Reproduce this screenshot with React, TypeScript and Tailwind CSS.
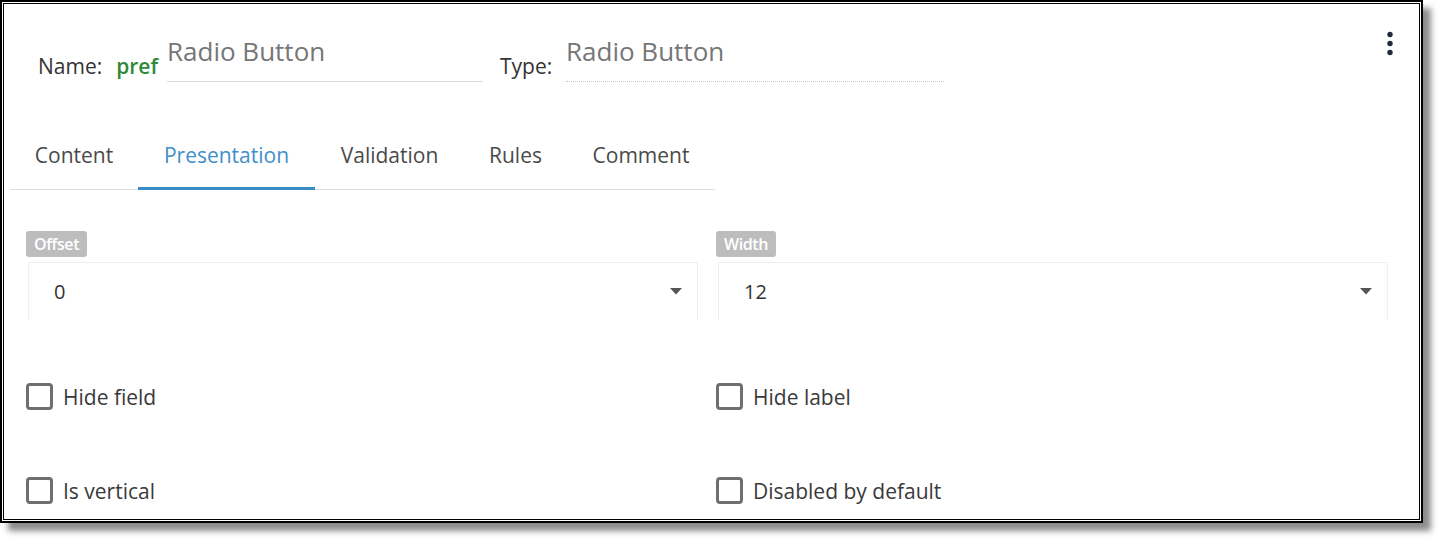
import { useState } from 'react';

const tabs = [
  { label: 'Content', width: 'w-[128px]' },
  { label: 'Presentation', width: 'w-[177px]' },
  { label: 'Validation', width: 'w-[149px]' },
  { label: 'Rules', width: 'w-[103px]' },
  { label: 'Comment', width: 'w-[148px]' },
];

function Kebab() {
  return (
    <svg width="8" height="26" viewBox="0 0 8 26">
      <circle cx="4" cy="3.5" r="2.7" fill="#1f2b3a" />
      <circle cx="4" cy="12.5" r="2.7" fill="#1f2b3a" />
      <circle cx="4" cy="21.5" r="2.7" fill="#1f2b3a" />
    </svg>
  );
}

function Caret() {
  return (
    <svg width="12" height="7" viewBox="0 0 12 7">
      <path d="M0 0 L12 0 L6 6.5 Z" fill="#555555" />
    </svg>
  );
}

function SelectField({ label, value }: { label: string; value: string }) {
  return (
    <div className="flex flex-col items-start">
      <span className="h-[26px] px-[8px] rounded-[3px] bg-[#bdbdbd] text-white text-[16px] font-semibold leading-[26px] tracking-[-0.4px]">
        {label}
      </span>
      <div className="mt-[5px] ml-[2px] self-stretch h-[58px] flex items-center justify-between pl-[25px] pr-[15px] border-t border-x border-[#efefef] text-[20px] text-[#333]">
        <span>{value}</span>
        <Caret />
      </div>
    </div>
  );
}

function Checkbox({ label }: { label: string }) {
  const [checked, setChecked] = useState(false);
  return (
    <label className="flex items-center gap-[10px] h-[27px] cursor-pointer" onClick={() => setChecked(!checked)}>
      <span className="w-[27px] h-[27px] border-[3px] border-[#6f6f6f] rounded-[4px] bg-white" />
      <span className="text-[21px] leading-[28px] text-[#3a3a3a]">{label}</span>
    </label>
  );
}

export default function App() {
  const [active, setActive] = useState('Presentation');

  return (
    <div className="w-[1439px] h-[537px] bg-white font-['Open_Sans',sans-serif]">
      <div className="w-[1423px] h-[523px] border-2 border-black p-px bg-white shadow-[8px_8px_6px_rgba(0,0,0,0.45)]">
        <div className="h-full border border-black bg-white overflow-hidden">
          {/* Header */}
          <div className="flex items-start pl-[34px] pr-[25px] pt-[27px]">
            <div className="w-[129px] flex items-baseline mt-[21px] text-[21px] leading-[28px]">
              <span className="text-[#333]">Name:</span>
              <span className="ml-[14px] font-semibold text-[#2f8a34]">pref</span>
            </div>
            <div className="mt-[4px] w-[316px] h-[47px] border-b border-[#dcdcdc] text-[26px] leading-[32px] text-[#767676]">
              Radio Button
            </div>
            <div className="ml-[17px] w-[66px] mt-[21px] text-[21px] leading-[28px] text-[#333]">Type:</div>
            <div className="mt-[4px] w-[378px] h-[47px] border-b border-dotted border-[#c8c8c8] text-[26px] leading-[32px] text-[#767676]">
              Radio Button
            </div>
            <div className="ml-auto">
              <Kebab />
            </div>
          </div>

          {/* Tabs */}
          <div className="ml-[6px] w-[705px] mt-[43px] flex border-b border-[#dedede]">
            {tabs.map(tab => (
              <button
                key={tab.label}
                onClick={() => setActive(tab.label)}
                className={
                  tab.width +
                  ' -mb-px pt-4 pb-[18px] border-b-[3px] text-center text-[21px] leading-[28px] ' +
                  (active === tab.label ? 'border-[#3a8cc4] text-[#3f8fc8]' : 'border-transparent text-[#4a4a4a]')
                }
              >
                {tab.label}
              </button>
            ))}
          </div>

          {/* Selects */}
          <div className="ml-[22px] w-[1362px] mt-[41px] grid grid-cols-2 gap-x-[18px]">
            <SelectField label="Offset" value="0" />
            <SelectField label="Width" value="12" />
          </div>

          {/* Checkboxes */}
          <div className="ml-[22px] w-[1362px] mt-[63px] grid grid-cols-2 gap-x-[18px] gap-y-[67px]">
            <Checkbox label="Hide field" />
            <Checkbox label="Hide label" />
            <Checkbox label="Is vertical" />
            <Checkbox label="Disabled by default" />
          </div>
        </div>
      </div>
    </div>
  );
}
